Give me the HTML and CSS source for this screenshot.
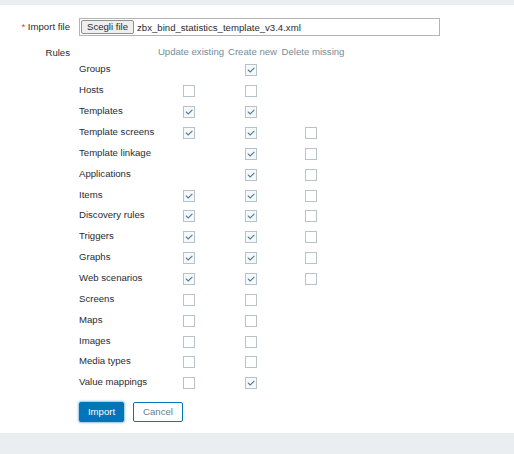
FILE: index.html
```html
<!DOCTYPE html>
<html lang="it">
<head>
<meta charset="utf-8">
<title>Import</title>
<link rel="stylesheet" href="styles.css">
</head>
<body>
<div class="page">
  <form class="form">
    <div class="label req"><span class="star">*</span> Import file</div>
    <div class="field">
      <div class="filebox"><span class="filebtn">Scegli file</span><span class="filename">zbx_bind_statistics_template_v3.4.xml</span></div>
    </div>

    <div class="label rules-label">Rules</div>
    <div class="field">
      <div class="rules" id="rules">
        <div class="th"></div>
        <div class="th">Update existing</div>
        <div class="th">Create new</div>
        <div class="th">Delete missing</div>
      </div>
    </div>

    <div class="label"></div>
    <div class="field buttons">
      <button type="button" class="btn primary">Import</button>
      <button type="button" class="btn alt">Cancel</button>
    </div>
  </form>
</div>
<script src="app.js"></script>
</body>
</html>
```

FILE: app.js
```js
var rows = [
  ["Groups", null, 1, null],
  ["Hosts", 0, 0, null],
  ["Templates", 1, 1, null],
  ["Template screens", 1, 1, 0],
  ["Template linkage", null, 1, 0],
  ["Applications", null, 1, 0],
  ["Items", 1, 1, 0],
  ["Discovery rules", 1, 1, 0],
  ["Triggers", 1, 1, 0],
  ["Graphs", 1, 1, 0],
  ["Web scenarios", 1, 1, 0],
  ["Screens", 0, 0, null],
  ["Maps", 0, 0, null],
  ["Images", 0, 0, null],
  ["Media types", 0, 0, null],
  ["Value mappings", 0, 1, null]
];
var tick = '<svg viewBox="0 0 12 12" width="12" height="12"><polyline points="2.8,5.6 5.2,8 9.4,3.8" fill="none" stroke="#4f7a94" stroke-width="1.1"/></svg>';
var html = "";
rows.forEach(function (r) {
  html += '<div class="td name">' + r[0] + '</div>';
  for (var i = 1; i < 4; i++) {
    if (r[i] === null) { html += '<div class="td"></div>'; }
    else { html += '<div class="td"><span class="cb' + (r[i] ? ' on' : '') + '">' + (r[i] ? tick : '') + '</span></div>'; }
  }
});
document.getElementById("rules").insertAdjacentHTML("beforeend", html);
```

FILE: styles.css
```css
html, body {
  margin: 0;
  padding: 0;
}
body {
  background: #ebeef0;
  padding-top: 5px;
  font-family: "Liberation Sans", Arial, sans-serif;
  font-size: 9.6px;
  color: #1f2c33;
}
.page {
  background: #ffffff;
  height: 428px;
  box-sizing: border-box;
  padding-top: 13px;
}
.form {
  display: grid;
  grid-template-columns: 70px 1fr;
  column-gap: 9px;
  margin: 0;
}
.label {
  text-align: right;
  line-height: 18px;
}
.star {
  color: #e33734;
}
.rules-label {
  margin-top: 10px;
  line-height: 14px;
}
.field {
  min-width: 0;
}
.filebox {
  width: 361px;
  height: 18px;
  box-sizing: border-box;
  border: 1px solid #b4b4b4;
  display: flex;
  align-items: center;
  padding-left: 1px;
}
.filebtn {
  height: 14px;
  box-sizing: border-box;
  border: 1px solid #8f8f8f;
  border-radius: 2px;
  background: #efefef;
  padding: 0 5px;
  line-height: 12px;
  color: #1f2c33;
}
.filename {
  margin-left: 3px;
  white-space: nowrap;
}
.rules {
  margin-top: 6px;
  display: grid;
  grid-template-columns: 78px 68px 55px 66px;
  grid-template-rows: 18px;
  grid-auto-rows: 20.87px;
}
.th {
  color: #768d99;
  text-align: center;
  white-space: nowrap;
  line-height: 18px;
  padding-top: 1px;
}
.td {
  display: flex;
  align-items: center;
  justify-content: center;
}
.td.name {
  justify-content: flex-start;
  white-space: nowrap;
  padding-bottom: 3px;
}
.cb {
  width: 12px;
  height: 12px;
  box-sizing: border-box;
  border: 1px solid #b7c3c9;
  background: #fff;
  margin-right: 4px;
  display: flex;
  align-items: center;
  justify-content: center;
}
.cb svg {
  display: block;
  flex: none;
}
.cb.on {
  background: #f6f9fb;
}
.buttons {
  margin-top: 8px;
  display: flex;
  gap: 9px;
}
.btn {
  font-family: "Liberation Sans", Arial, sans-serif;
  font-size: 9.6px;
  height: 20px;
  box-sizing: border-box;
  border-radius: 2px;
  margin: 0;
  line-height: 18px;
  cursor: pointer;
}
.primary {
  margin-left: 0;
  width: 45px;
  background: #0275b8;
  border: 1px solid #0275b8;
  color: #fff;
  box-shadow: 0 0 2px 1px rgba(2, 117, 184, 0.45);
  padding: 0;
}
.alt {
  width: 50px;
  background: #fff;
  border: 1px solid #0275b8;
  color: #5f7f92;
  padding: 0;
}
```
